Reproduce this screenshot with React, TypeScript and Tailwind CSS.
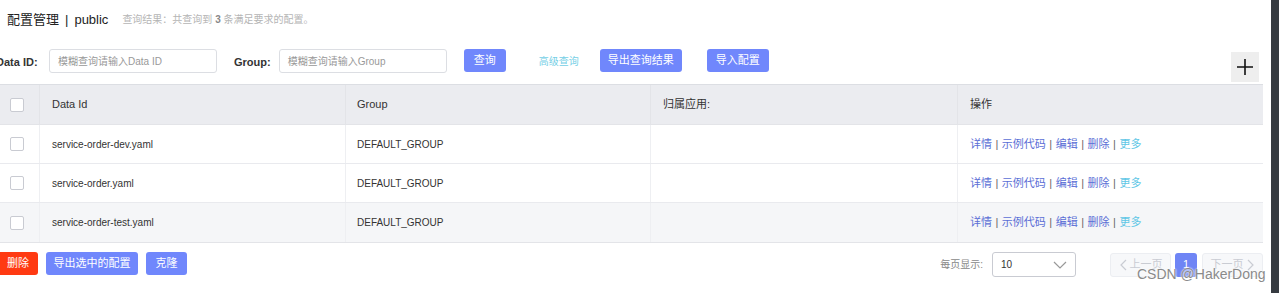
import React from "react";

const F = { fontFamily: '"Liberation Sans", "Noto Sans CJK SC", sans-serif' };

function Checkbox() {
  return <div className="w-[14px] h-[14px] bg-white border border-[#c9cbd2] rounded-[2px]" />;
}

function Btn({ children, w, bg = "bg-[#7087fc]" }: { children: React.ReactNode; w: string; bg?: string }) {
  return (
    <div className={`${w} ${bg} h-[23px] rounded-[3px] text-white text-[11px] flex items-center justify-center`}>
      {children}
    </div>
  );
}

const rows = [
  { id: "service-order-dev.yaml", bg: "bg-white" },
  { id: "service-order.yaml", bg: "bg-white" },
  { id: "service-order-test.yaml", bg: "bg-[#f5f6f8]" },
];

function Ops() {
  const sep = <span className="text-[#666] mx-[3.5px]">|</span>;
  return (
    <div className="text-[11px] text-[#5b6fd6] flex items-center">
      <span>详情</span>
      {sep}
      <span>示例代码</span>
      {sep}
      <span>编辑</span>
      {sep}
      <span>删除</span>
      {sep}
      <span className="text-[#5fc7e6]">更多</span>
    </div>
  );
}

export default function App() {
  return (
    <div className="w-[1279px] h-[293px] bg-white flex overflow-hidden relative" style={F}>
      <div className="w-[1271px] h-full flex flex-col">
        {/* title */}
        <div className="h-[40px] flex items-center pl-[7px] pb-[1px]">
          <span className="text-[13px] text-[#222]">配置管理</span>
          <span className="text-[13px] text-[#222] mx-[6px]">|</span>
          <span className="text-[13px] text-[#222]">public</span>
          <span className="text-[10px] text-[#b5b5b5] ml-[14px]">
            查询结果：共查询到 <b className="text-[#888]">3</b> 条满足要求的配置。
          </span>
        </div>
        {/* search row */}
        <div className="h-[44px] flex items-start ml-[-4px]">
          <span className="mt-[14px] text-[11px] font-bold text-[#333] w-[45px] shrink-0">Data ID:</span>
          <div className="ml-[8px] mt-[9px] w-[168px] h-[24px] border border-[#dcdee3] rounded-[3px] flex items-center pl-[8px] text-[10px] text-[#999]">
            模糊查询请输入Data ID
          </div>
          <span className="ml-[17px] mt-[14px] text-[11px] font-bold text-[#333]">Group:</span>
          <div className="ml-[8px] mt-[9px] w-[168px] h-[24px] border border-[#dcdee3] rounded-[3px] flex items-center pl-[8px] text-[10px] text-[#999]">
            模糊查询请输入Group
          </div>
          <div className="ml-[17px] mt-[9px]">
            <Btn w="w-[42px]">查询</Btn>
          </div>
          <span className="ml-[33px] mt-[14px] text-[10px] text-[#75cfe6]">高级查询</span>
          <div className="ml-[21px] mt-[9px]">
            <Btn w="w-[82px]">导出查询结果</Btn>
          </div>
          <div className="ml-[25px] mt-[9px]">
            <Btn w="w-[62px]">导入配置</Btn>
          </div>
          <div className="ml-auto mr-[12px] mt-[12px] w-[28px] h-[30px] bg-[#eeeeee] flex items-center justify-center">
            <svg width="18" height="18" viewBox="0 0 18 18">
              <path d="M9 1V17M1 9H17" stroke="#111" strokeWidth="1.6" />
            </svg>
          </div>
        </div>
        {/* table */}
        <div className="w-[1263px] border-t border-[#dcdee3] border-b border-b-[#e3e4e8]">
          <div className="h-[40px] bg-[#ebecf0] flex text-[11px] text-[#333] border-b border-[#e3e4e8]">
            <div className="w-[40px] flex items-center pl-[10px] border-r border-[#e3e4e8]">
              <Checkbox />
            </div>
            <div className="w-[306px] flex items-center pl-[12px] border-r border-[#e3e4e8]">Data Id</div>
            <div className="w-[305px] flex items-center pl-[11px] border-r border-[#e3e4e8]">Group</div>
            <div className="w-[307px] flex items-center pl-[12px] border-r border-[#e3e4e8]">归属应用:</div>
            <div className="flex-1 flex items-center pl-[12px]">操作</div>
          </div>
          {rows.map((r, i) => (
            <div
              key={r.id}
              className={`h-[39px] flex text-[10px] text-[#333] ${r.bg} ${i < rows.length - 1 ? "border-b border-[#e9eaee]" : ""}`}
            >
              <div className="w-[40px] flex items-center pl-[10px] border-r border-[#eeeff2]">
                <Checkbox />
              </div>
              <div className="w-[306px] flex items-center pl-[12px] border-r border-[#eeeff2]">{r.id}</div>
              <div className="w-[305px] flex items-center pl-[11px] border-r border-[#eeeff2]">DEFAULT_GROUP</div>
              <div className="w-[307px] flex items-center pl-[12px] border-r border-[#eeeff2]"></div>
              <div className="flex-1 flex items-center pl-[12px]">
                <Ops />
              </div>
            </div>
          ))}
        </div>
        {/* footer */}
        <div className="flex items-start mt-[9px] w-[1263px]">
          <div className="ml-[-2px]">
            <Btn w="w-[40px]" bg="bg-[#ff3a12]">删除</Btn>
          </div>
          <div className="ml-[8px]">
            <Btn w="w-[92px]">导出选中的配置</Btn>
          </div>
          <div className="ml-[8px]">
            <Btn w="w-[41px]">克隆</Btn>
          </div>
          <div className="ml-auto flex items-center">
            <span className="text-[10px] text-[#888] mr-[9px]">每页显示:</span>
            <div className="w-[84px] h-[25px] border border-[#c9cbd2] rounded-[3px] flex items-center justify-between pl-[8px] pr-[8px] text-[10px] text-[#333]">
              <span>10</span>
              <svg width="14" height="10" viewBox="0 0 14 10">
                <path d="M1 2L7 8L13 2" stroke="#999" strokeWidth="1.2" fill="none" />
              </svg>
            </div>
            <div className="ml-[34px] w-[61px] h-[24px] bg-[#f7f8fa] border border-[#eceef2] rounded-[3px] flex items-center justify-center text-[11px] text-[#c9ccd3]">
              <svg width="8" height="12" viewBox="0 0 8 12" className="mr-[3px]">
                <path d="M7 1L2 6L7 11" stroke="#c9ccd3" strokeWidth="1.2" fill="none" />
              </svg>
              上一页
            </div>
            <div className="ml-[4px] w-[22px] h-[24px] bg-[#6f85f5] rounded-[3px] flex items-center justify-center text-[11px] text-white">
              1
            </div>
            <div className="ml-[5px] w-[61px] h-[24px] bg-[#f7f8fa] border border-[#eceef2] rounded-[3px] flex items-center justify-center text-[11px] text-[#c9ccd3]">
              下一页
              <svg width="8" height="12" viewBox="0 0 8 12" className="ml-[3px]">
                <path d="M1 1L6 6L1 11" stroke="#c9ccd3" strokeWidth="1.2" fill="none" />
              </svg>
            </div>
          </div>
        </div>
      </div>
      <div className="w-[8px] h-full bg-[#363b41]" />
      <div
        className="absolute left-[1137px] top-[264px] text-[14px] text-[#8a8a8a] pointer-events-none"
        style={{ fontFamily: '"Liberation Sans", sans-serif', textShadow: "0 0 2px #fff, 0 0 2px #fff" }}
      >
        CSDN @HakerDong
      </div>
    </div>
  );
}
